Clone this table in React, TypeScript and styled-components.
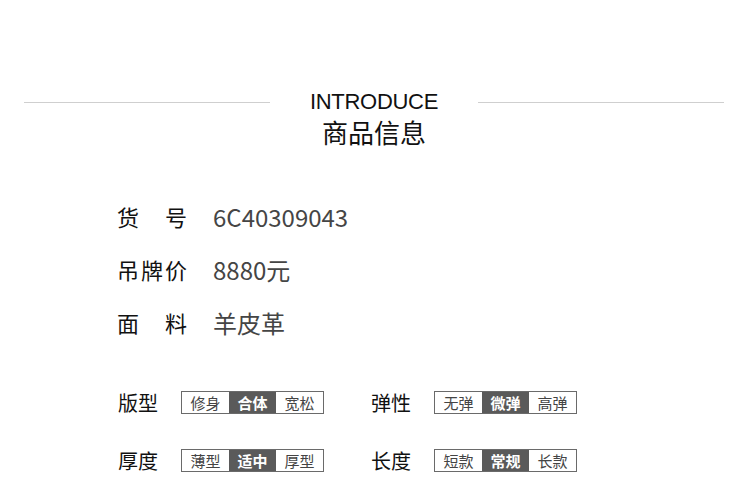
import React from 'react';
import styled, { createGlobalStyle } from 'styled-components';

const GlobalStyle = createGlobalStyle`
  html, body {
    margin: 0;
    padding: 0;
    background: #ffffff;
  }
  body {
    font-family: "Noto Sans CJK SC", "Noto Sans", sans-serif;
  }
`;

const Page = styled.div`
  width: 750px;
  height: 477px;
  overflow: hidden;
  padding-top: 88px;
  box-sizing: border-box;
`;

const Header = styled.div`
  display: flex;
  align-items: flex-start;
  padding: 0 26px 0 24px;
`;

const Rule = styled.div`
  flex: 1;
  height: 1px;
  margin-top: 14px;
  background: #cfcfcf;
`;

const TitleBox = styled.div`
  width: 208px;
  display: flex;
  flex-direction: column;
  align-items: center;
`;

const EnTitle = styled.div`
  font-family: "Liberation Sans", Arial, sans-serif;
  font-size: 22px;
  line-height: 28px;
  color: #111;
  letter-spacing: -0.3px;
`;

const CnTitle = styled.div`
  font-family: "Noto Sans CJK SC", sans-serif;
  font-size: 26px;
  line-height: 32px;
  color: #111;
`;

const InfoList = styled.div`
  margin-top: 52px;
  padding-left: 117px;
  display: flex;
  flex-direction: column;
  gap: 21px;
`;

const InfoRow = styled.div`
  display: flex;
  align-items: center;
  height: 32px;
`;

const InfoLabel = styled.div`
  width: 70px;
  display: flex;
  justify-content: space-between;
  font-size: 22px;
  color: #111;
  margin-right: 26px;
`;

const InfoValue = styled.div`
  font-size: 24px;
  color: #454545;
`;

const SpecGrid = styled.div`
  margin-top: 49px;
  padding-left: 118px;
  display: grid;
  grid-template-columns: 253px 253px;
  row-gap: 28px;
`;

const Spec = styled.div`
  display: flex;
  align-items: center;
  height: 30px;
`;

const SpecLabel = styled.div`
  width: 40px;
  margin-right: 23px;
  font-size: 20px;
  color: #111;
  white-space: nowrap;
`;

const Options = styled.div`
  display: flex;
  border: 1px solid #6a6a6a;
  height: 21px;
`;

const Option = styled.div<{ $active?: boolean }>`
  padding: 0 8.5px;
  font-size: 15px;
  line-height: 21px;
  color: ${(p) => (p.$active ? '#ffffff' : '#444')};
  background: ${(p) => (p.$active ? '#5a5a5a' : 'transparent')};
  font-weight: ${(p) => (p.$active ? 600 : 400)};
`;

const info = [
  { label: ['货', '号'], value: '6C40309043' },
  { label: ['吊', '牌', '价'], value: '8880元' },
  { label: ['面', '料'], value: '羊皮革' },
];

const specs = [
  { label: '版型', options: ['修身', '合体', '宽松'], active: 1 },
  { label: '弹性', options: ['无弹', '微弹', '高弹'], active: 1 },
  { label: '厚度', options: ['薄型', '适中', '厚型'], active: 1 },
  { label: '长度', options: ['短款', '常规', '长款'], active: 1 },
];

const App = () => {
  return (
    <Page>
      <GlobalStyle />
      <Header>
        <Rule />
        <TitleBox>
          <EnTitle>INTRODUCE</EnTitle>
          <CnTitle>商品信息</CnTitle>
        </TitleBox>
        <Rule />
      </Header>

      <InfoList>
        {info.map((row) => (
          <InfoRow key={row.value}>
            <InfoLabel>
              {row.label.map((ch) => (
                <span key={ch}>{ch}</span>
              ))}
            </InfoLabel>
            <InfoValue>{row.value}</InfoValue>
          </InfoRow>
        ))}
      </InfoList>

      <SpecGrid>
        {specs.map((spec) => (
          <Spec key={spec.label}>
            <SpecLabel>{spec.label}</SpecLabel>
            <Options>
              {spec.options.map((opt, i) => (
                <Option key={opt} $active={i === spec.active}>
                  {opt}
                </Option>
              ))}
            </Options>
          </Spec>
        ))}
      </SpecGrid>
    </Page>
  );
};

export default App;
